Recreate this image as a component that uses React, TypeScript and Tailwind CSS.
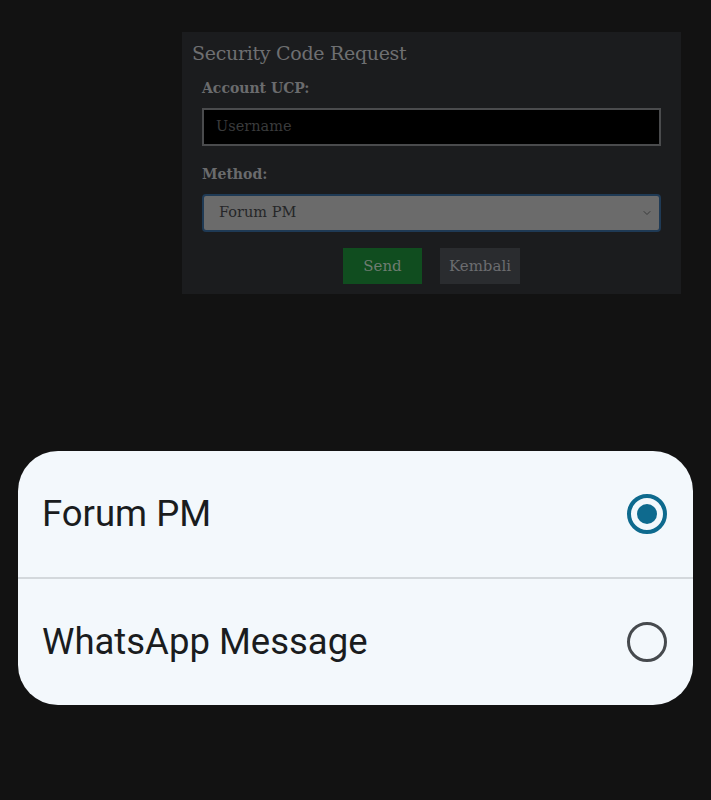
import { ChevronDown } from "lucide-react";

const options = [
  { label: "Forum PM", checked: true },
  { label: "WhatsApp Message", checked: false },
];

const Radio = ({ checked }: { checked: boolean }) =>
  checked ? (
    <div className="w-[40px] h-[40px] rounded-full border-[4px] border-[#0e6a8e] flex items-center justify-center">
      <div className="w-[20px] h-[20px] rounded-full bg-[#0e6a8e]" />
    </div>
  ) : (
    <div className="w-[40px] h-[40px] rounded-full border-[3.5px] border-[#464a4e]" />
  );

export default function App() {
  return (
    <div className="min-h-[800px] w-[711px] bg-[#121212] flex flex-col [font-family:'DejaVu_Serif',serif]">
      {/* Dimmed form behind the sheet */}
      <div className="pt-[32px] pl-[182px] pr-[30px]">
        <div className="bg-[#1b1c1e] px-[10px] pt-[7px] pb-[10px]">
          <h1 className="text-[19px] text-[#6e6f71] leading-[28px] tracking-[-0.3px]">Security Code Request</h1>
          <div className="px-[10px]">
            <p className="mt-[11px] text-[14px] font-bold text-[#6a6b6d] leading-[20px]">Account UCP:</p>
            <div className="mt-[10px] h-[38px] bg-black border-2 border-[#4a4b4d] flex items-center px-[12px]">
              <span className="text-[14.5px] text-[#3a3b3c]">Username</span>
            </div>
            <p className="mt-[18px] text-[14px] font-bold text-[#6a6b6d] leading-[20px]">Method:</p>
            <div className="mt-[10px] h-[38px] bg-[#6b6b6b] border-2 border-[#1f3a55] rounded-[4px] flex items-center justify-between pl-[15px] pr-[6px]">
              <span className="text-[14.5px] text-[#252628]">Forum PM</span>
              <ChevronDown className="w-[12px] h-[12px] text-[#3a3b3c]" strokeWidth={2} />
            </div>
            <div className="mt-[16px] flex justify-center gap-[18px]">
              <div className="w-[79px] h-[36px] bg-[#104d1f] flex items-center justify-center text-[15px] text-[#6f7c72]">Send</div>
              <div className="w-[80px] h-[36px] bg-[#2a2c2f] flex items-center justify-center text-[15px] text-[#6c6d70]">Kembali</div>
            </div>
          </div>
        </div>
      </div>

      {/* Bottom sheet */}
      <div className="mt-[157px] mx-[18px] bg-[#f3f8fc] rounded-[40px] overflow-hidden [font-family:Roboto,sans-serif]">
        {options.map((o, i) => (
          <div key={o.label}>
            {i > 0 && <div className="h-[2px] bg-[#d3d8dc]" />}
            <div className="h-[126px] flex items-center justify-between pl-[24px] pr-[26px]">
              <span className="text-[36.5px] text-[#1a1c1e]">{o.label}</span>
              <Radio checked={o.checked} />
            </div>
          </div>
        ))}
      </div>
    </div>
  );
}
